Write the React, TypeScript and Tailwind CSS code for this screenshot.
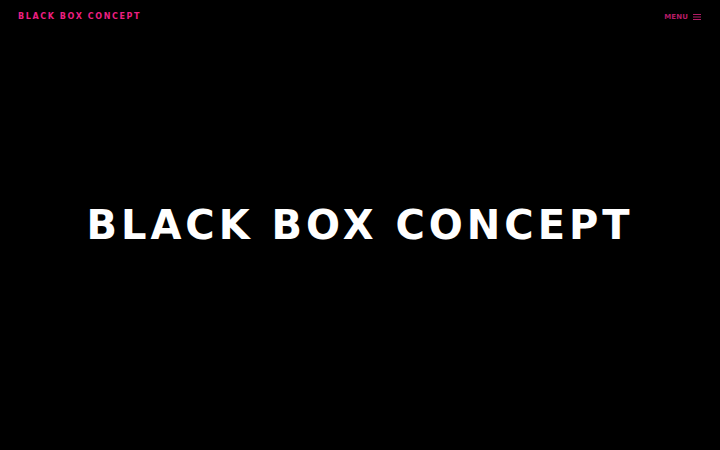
export default function App() {
  return (
    <div
      className="flex h-[450px] w-[720px] flex-col bg-black"
      style={{ fontFamily: '"DejaVu Sans", sans-serif' }}
    >
      <header className="flex items-center justify-between px-[18px] pt-[11px]">
        <span className="text-[8px] font-bold uppercase leading-[10px] tracking-[0.2em] text-[#ec1f80]">
          Black Box Concept
        </span>
        <button className="mt-[1px] flex items-center gap-[5px] pr-[1px] text-[#b41c66]">
          <span className="text-[7px] font-bold uppercase leading-[10px] tracking-[0.02em]">
            Menu
          </span>
          <svg
            className="h-[8px] w-[8px]"
            viewBox="0 0 8 8"
            fill="none"
            stroke="currentColor"
            strokeWidth="1"
          >
            <path d="M0 1.5h8M0 4h8M0 6.5h8" />
          </svg>
        </button>
      </header>

      <main className="flex flex-1 items-center justify-center pb-[22px]">
        <h1 className="text-[40px] font-bold uppercase leading-none tracking-[0.1em] text-white">
          Black Box Concept
        </h1>
      </main>
    </div>
  );
}
